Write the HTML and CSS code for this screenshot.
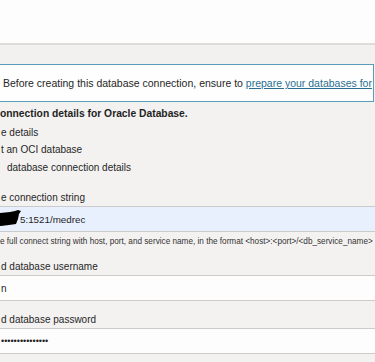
FILE: index.html
```html
<!DOCTYPE html>
<html lang="en">
<head>
  <meta charset="UTF-8">
  <meta name="viewport" content="width=device-width, initial-scale=1.0">
  <title>Oracle Database connection</title>
  <link rel="stylesheet" href="styles.css">
</head>
<body>

  <div class="top-space"></div>
  <div class="toolbar"></div>

  <!-- info banner -->
  <div class="info">
    <p>Before creating this database connection, ensure to <a href="#">prepare your databases for</a></p>
  </div>

  <!-- connection form -->
  <div class="panel">
    <h3>onnection details for Oracle Database.</h3>
    <div class="option option-first">e details</div>
    <div class="option">t an OCI database</div>
    <div class="option option-last">database connection details</div>

    <div class="field field-first">
      <label for="connString">e connection string</label>
      <div class="input-wrap">
        <input type="text" id="connString" class="filled" value="5:1521/medrec">
        <svg class="redact" width="22" height="16" viewBox="0 0 22 16">
          <path d="M0 3 L10 2 L15 1 L18 0 L21 1 L19 4 L18 9 L16 14 L9 15 L0 16 Z" fill="#000"/>
        </svg>
      </div>
      <p class="hint">e full connect string with host, port, and service name, in the format &lt;host&gt;:&lt;port&gt;/&lt;db_service_name&gt;</p>
    </div>

    <div class="field">
      <label for="dbUser">d database username</label>
      <input type="text" id="dbUser" value="n">
    </div>

    <div class="field">
      <label for="dbPass">d database password</label>
      <input type="password" id="dbPass" value="passwordmedrec1">
    </div>
  </div>

</body>
</html>
```

FILE: styles.css
```css
  * {
    box-sizing: border-box;
  }
  body, html {
    margin: 0;
    padding: 0;
    width: 100%;
    height: 100%;
    font-family: "Liberation Sans", Arial, sans-serif;
    font-size: 10px;
    color: #262626;
    background-color: #f3f2f1;
    overflow: hidden;
  }
  .top-space {
    height: 43px;
    background-color: #fdfdfd;
  }
  .toolbar {
    height: 21px;
    border-top: 2px solid #dcdcdc;
    background-color: #f2f1f0;
  }
  .info {
    width: 374px;
    height: 38px;
    border: 1px solid #5b9db8;
    border-left: none;
    background-color: #fefefe;
    display: flex;
    align-items: center;
    font-size: 10.5px;
  }
  .info p {
    margin: 0;
    padding-left: 3px;
    white-space: nowrap;
  }
  .info a {
    color: #2a6f8f;
    text-decoration: underline;
  }
  .panel {
    padding-top: 4px;
  }
  .panel h3 {
    margin: 0;
    font-size: 10.3px;
    line-height: 16px;
    font-weight: bold;
    color: #1f1f1f;
  }
  .option {
    line-height: 17px;
    padding-left: 1px;
  }
  .option-first {
    margin-top: 2px;
  }
  .option-last {
    margin-top: 1px;
    padding-left: 7px;
  }
  .field {
    margin-top: 12px;
  }
  .field-first {
    margin-top: 15px;
  }
  .field label {
    display: block;
    line-height: 14px;
    padding-left: 1px;
    margin-bottom: 1px;
  }
  .input-wrap {
    position: relative;
  }
  input[type="text"], input[type="password"] {
    display: block;
    width: 100%;
    height: 26px;
    margin: 0;
    padding: 0 0 0 1px;
    border: none;
    border-top: 1px solid #cbcbcb;
    border-bottom: 1px solid #cbcbcb;
    background-color: #fdfdfd;
    font-family: "Liberation Sans", Arial, sans-serif;
    font-size: 10px;
    color: #1f1f1f;
    outline: none;
  }
  input.filled {
    background-color: #e8f0fe;
    padding-left: 20px;
    font-size: 9.8px;
  }
  .redact {
    position: absolute;
    left: 0;
    top: 4px;
  }
  .hint {
    margin: 4px 0 0 0;
    font-size: 8.2px;
    line-height: 12px;
    white-space: nowrap;
    color: #333;
  }
  #dbPass {
    font-size: 9px;
  }
```
